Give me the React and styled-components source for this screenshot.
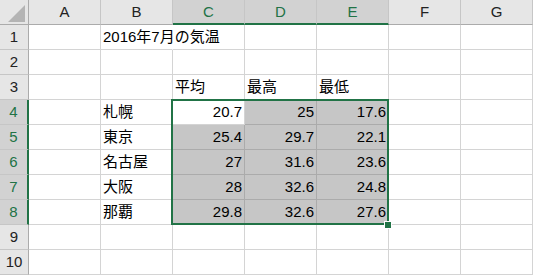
import React from 'react';
import styled, { createGlobalStyle } from 'styled-components';

const GREEN = '#217346';

const Global = createGlobalStyle`
  html, body { margin: 0; padding: 0; background: #fff; overflow: hidden; }
  body { font-family: "Liberation Sans", "Noto Sans CJK JP", sans-serif; }
`;

const Sheet = styled.div`
  position: relative;
  width: 533px;
  height: 275px;
  display: grid;
  grid-template-columns: 29px repeat(7, 72px);
  grid-auto-rows: 25px;
  background: #fff;
  font-size: 15px;
  color: #000;
  overflow: hidden;
`;

const Corner = styled.div`
  box-sizing: border-box;
  background: #e6e6e6;
  border-right: 1px solid #ababab;
  border-bottom: 1px solid #ababab;
  display: flex;
  align-items: flex-end;
  justify-content: flex-end;
  padding: 0 3px 2px 0;
`;

const ColHead = styled.div`
  box-sizing: border-box;
  background: ${(p) => (p.$sel ? '#d2d2d2' : '#e6e6e6')};
  color: ${(p) => (p.$sel ? GREEN : '#222')};
  border-right: 1px solid ${(p) => (p.$last ? '#ababab' : '#c6c6c6')};
  border-bottom: ${(p) => (p.$sel ? `2px solid ${GREEN}` : '1px solid #ababab')};
  display: flex;
  align-items: center;
  justify-content: center;
  line-height: 24px;
`;

const RowHead = styled.div`
  box-sizing: border-box;
  background: ${(p) => (p.$sel ? '#d2d2d2' : '#e6e6e6')};
  color: ${(p) => (p.$sel ? GREEN : '#222')};
  border-right: ${(p) => (p.$sel ? `2px solid ${GREEN}` : '1px solid #ababab')};
  border-bottom: 1px solid #c6c6c6;
  display: flex;
  align-items: center;
  justify-content: center;
  line-height: 24px;
`;

const Cell = styled.div`
  box-sizing: border-box;
  border-right: 1px solid
    ${(p) => (p.$flow ? 'transparent' : p.$sel ? '#ababab' : '#d4d4d4')};
  border-bottom: 1px solid ${(p) => (p.$sel ? '#ababab' : '#d4d4d4')};
  background: ${(p) => (p.$sel ? '#c6c6c6' : 'transparent')};
  padding: 0 2px;
  line-height: 24px;
  white-space: nowrap;
  overflow: visible;
  text-align: ${(p) => (p.$num ? 'right' : 'left')};
`;

const Selection = styled.div`
  position: absolute;
  left: 171px;
  top: 99px;
  width: 218px;
  height: 126px;
  box-sizing: border-box;
  border: 2px solid ${GREEN};
  pointer-events: none;
`;

const FillHandle = styled.div`
  position: absolute;
  left: 384px;
  top: 221px;
  width: 6px;
  height: 6px;
  background: ${GREEN};
  border: 1px solid #fff;
`;

const cols = ['A', 'B', 'C', 'D', 'E', 'F', 'G'];

const cities = ['札幌', '東京', '名古屋', '大阪', '那覇'];
const temps = [
  ['20.7', '25', '17.6'],
  ['25.4', '29.7', '22.1'],
  ['27', '31.6', '23.6'],
  ['28', '32.6', '24.8'],
  ['29.8', '32.6', '27.6'],
];

function cellContent(r, c) {
  if (r === 1 && c === 1) return { text: '2016年7月の気温', flow: true };
  if (r === 3 && c >= 2 && c <= 4) return { text: ['平均', '最高', '最低'][c - 2] };
  if (r >= 4 && r <= 8) {
    if (c === 1) return { text: cities[r - 4] };
    if (c >= 2 && c <= 4) return { text: temps[r - 4][c - 2], num: true };
  }
  return { text: '' };
}

export default function App() {
  const rows = [];
  for (let r = 1; r <= 10; r++) {
    const rowSel = r >= 4 && r <= 8;
    rows.push(
      <RowHead key={`h${r}`} $sel={rowSel}>
        {r}
      </RowHead>
    );
    cols.forEach((_, c) => {
      const { text, flow, num } = cellContent(r, c);
      const sel = rowSel && c >= 2 && c <= 4 && !(r === 4 && c === 2);
      rows.push(
        <Cell key={`${r}-${c}`} $sel={sel} $flow={flow} $num={num}>
          {text}
        </Cell>
      );
    });
  }

  return (
    <>
      <Global />
      <Sheet>
        <Corner>
          <svg width="17" height="17" viewBox="0 0 17 17">
            <polygon points="0,17 17,0 17,17" fill="#b4b4b4" />
          </svg>
        </Corner>
        {cols.map((c, i) => (
          <ColHead key={c} $sel={i >= 2 && i <= 4}>
            {c}
          </ColHead>
        ))}
        {rows}
        <Selection />
        <FillHandle />
      </Sheet>
    </>
  );
}
